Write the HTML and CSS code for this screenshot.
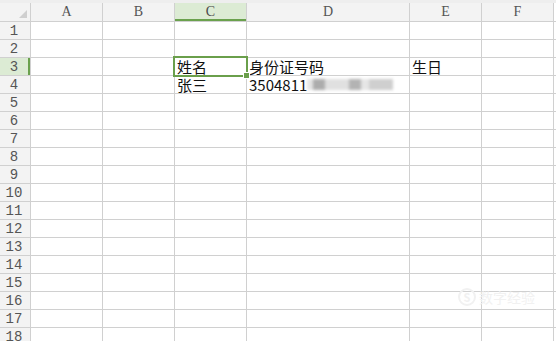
FILE: index.html
```html
<!DOCTYPE html>
<html lang="zh-CN">
<head>
    <meta charset="UTF-8">
    <title>表格</title>
    <link rel="stylesheet" href="styles.css">
</head>
<body>
    <div class="sheet">
        <div class="grid">
            <div class="corner"><span class="tri"></span></div>
            <div class="colhead">A</div>
            <div class="colhead">B</div>
            <div class="colhead active">C</div>
            <div class="colhead">D</div>
            <div class="colhead">E</div>
            <div class="colhead">F</div>
            <div class="pad"></div>

            <div class="rowhead">1</div><div class="cell"></div><div class="cell"></div><div class="cell"></div><div class="cell"></div><div class="cell"></div><div class="cell"></div><div class="pad"></div>
            <div class="rowhead">2</div><div class="cell"></div><div class="cell"></div><div class="cell"></div><div class="cell"></div><div class="cell"></div><div class="cell"></div><div class="pad"></div>
            <div class="rowhead active">3</div><div class="cell"></div><div class="cell"></div><div class="cell selected">姓名<span class="handle"></span></div><div class="cell">身份证号码</div><div class="cell">生日</div><div class="cell"></div><div class="pad"></div>
            <div class="rowhead">4</div><div class="cell"></div><div class="cell"></div><div class="cell">张三</div>
            <div class="cell">3504811<span class="blur">
                <i class="b1"></i><i class="b2"></i><i class="b3"></i><i class="b4"></i><i class="b5"></i><i class="b6"></i>
            </span></div>
            <div class="cell"></div><div class="cell"></div><div class="pad"></div>
            <div class="rowhead">5</div><div class="cell"></div><div class="cell"></div><div class="cell"></div><div class="cell"></div><div class="cell"></div><div class="cell"></div><div class="pad"></div>
            <div class="rowhead">6</div><div class="cell"></div><div class="cell"></div><div class="cell"></div><div class="cell"></div><div class="cell"></div><div class="cell"></div><div class="pad"></div>
            <div class="rowhead">7</div><div class="cell"></div><div class="cell"></div><div class="cell"></div><div class="cell"></div><div class="cell"></div><div class="cell"></div><div class="pad"></div>
            <div class="rowhead">8</div><div class="cell"></div><div class="cell"></div><div class="cell"></div><div class="cell"></div><div class="cell"></div><div class="cell"></div><div class="pad"></div>
            <div class="rowhead">9</div><div class="cell"></div><div class="cell"></div><div class="cell"></div><div class="cell"></div><div class="cell"></div><div class="cell"></div><div class="pad"></div>
            <div class="rowhead">10</div><div class="cell"></div><div class="cell"></div><div class="cell"></div><div class="cell"></div><div class="cell"></div><div class="cell"></div><div class="pad"></div>
            <div class="rowhead">11</div><div class="cell"></div><div class="cell"></div><div class="cell"></div><div class="cell"></div><div class="cell"></div><div class="cell"></div><div class="pad"></div>
            <div class="rowhead">12</div><div class="cell"></div><div class="cell"></div><div class="cell"></div><div class="cell"></div><div class="cell"></div><div class="cell"></div><div class="pad"></div>
            <div class="rowhead">13</div><div class="cell"></div><div class="cell"></div><div class="cell"></div><div class="cell"></div><div class="cell"></div><div class="cell"></div><div class="pad"></div>
            <div class="rowhead">14</div><div class="cell"></div><div class="cell"></div><div class="cell"></div><div class="cell"></div><div class="cell"></div><div class="cell"></div><div class="pad"></div>
            <div class="rowhead">15</div><div class="cell"></div><div class="cell"></div><div class="cell"></div><div class="cell"></div><div class="cell"></div><div class="cell"></div><div class="pad"></div>
            <div class="rowhead">16</div><div class="cell"></div><div class="cell"></div><div class="cell"></div><div class="cell"></div><div class="cell"></div><div class="cell"></div><div class="pad"></div>
            <div class="rowhead">17</div><div class="cell"></div><div class="cell"></div><div class="cell"></div><div class="cell"></div><div class="cell"></div><div class="cell"></div><div class="pad"></div>
            <div class="rowhead">18</div><div class="cell"></div><div class="cell"></div><div class="cell"></div><div class="cell"></div><div class="cell"></div><div class="cell"></div><div class="pad"></div>
        </div>
        <div class="watermark"><span class="wm-logo">S</span><span class="wm-text">数字经验</span></div>
    </div>
</body>
</html>
```

FILE: styles.css
```css
body {
    margin: 0;
    padding: 0;
    background-color: #ffffff;
    overflow: hidden;
}
.sheet {
    position: relative;
    padding-top: 3px;
    background-color: #eeeeee;
}
.grid {
    display: grid;
    grid-template-columns: 30px 71px 71px 71px 162px 71px 71px 2px;
    grid-template-rows: 18px repeat(18, 17px);
    gap: 1px;
    background-color: #d0d0d0;
}
.corner, .colhead, .rowhead {
    background-color: #f3f3f3;
    color: #555;
    font-family: "Liberation Mono", monospace;
    font-size: 14px;
}
.corner {
    position: relative;
}
.tri {
    position: absolute;
    right: 3px;
    bottom: 3px;
    width: 0;
    height: 0;
    border-left: 8px solid transparent;
    border-bottom: 8px solid #cfcfcf;
}
.colhead {
    display: flex;
    align-items: center;
    justify-content: center;
    font-family: "Liberation Serif", serif;
    font-size: 14px;
}
.colhead.active {
    background-color: #dcebd4;
    box-shadow: inset 0 -2px 0 #6aa14d;
    color: #4a4a4a;
}
.rowhead {
    display: flex;
    align-items: center;
    justify-content: center;
    padding-right: 2px;
}
.rowhead.active {
    background-color: #dcebd4;
    box-shadow: inset -2px 0 0 #6aa14d;
}
.cell {
    background-color: #ffffff;
    font-family: "Noto Sans CJK SC", sans-serif;
    font-size: 15px;
    line-height: 17px;
    color: #111;
    padding-left: 2px;
    white-space: nowrap;
    position: relative;
}
.pad {
    background-color: #ffffff;
}
.selected {
    outline: 2px solid #6a9f4b;
    z-index: 2;
}
.handle {
    position: absolute;
    right: -4px;
    bottom: -4px;
    width: 5px;
    height: 5px;
    background-color: #6a9f4b;
    border: 1px solid #ffffff;
}
.blur {
    display: inline-flex;
    align-items: center;
    vertical-align: top;
    height: 17px;
    filter: blur(1.5px);
}
.blur i {
    display: block;
    height: 11px;
}
.b1 { width: 6px; background-color: #e4e4e4; }
.b2 { width: 12px; background-color: #acacac; }
.b3 { width: 24px; background-color: #e0e0e0; }
.b4 { width: 12px; background-color: #b3b3b3; }
.b5 { width: 8px; background-color: #e6e6e6; }
.b6 { width: 24px; background-color: #cfcfcf; }
.watermark {
    position: absolute;
    left: 458px;
    top: 287px;
    display: flex;
    align-items: center;
    gap: 3px;
    color: #f1f1f1;
    font-family: "Noto Sans CJK SC", sans-serif;
    font-size: 14px;
}
.wm-logo {
    width: 14px;
    height: 14px;
    border: 2px solid #f1f1f1;
    border-radius: 50%;
    font-size: 11px;
    line-height: 14px;
    text-align: center;
    font-weight: bold;
}
```
